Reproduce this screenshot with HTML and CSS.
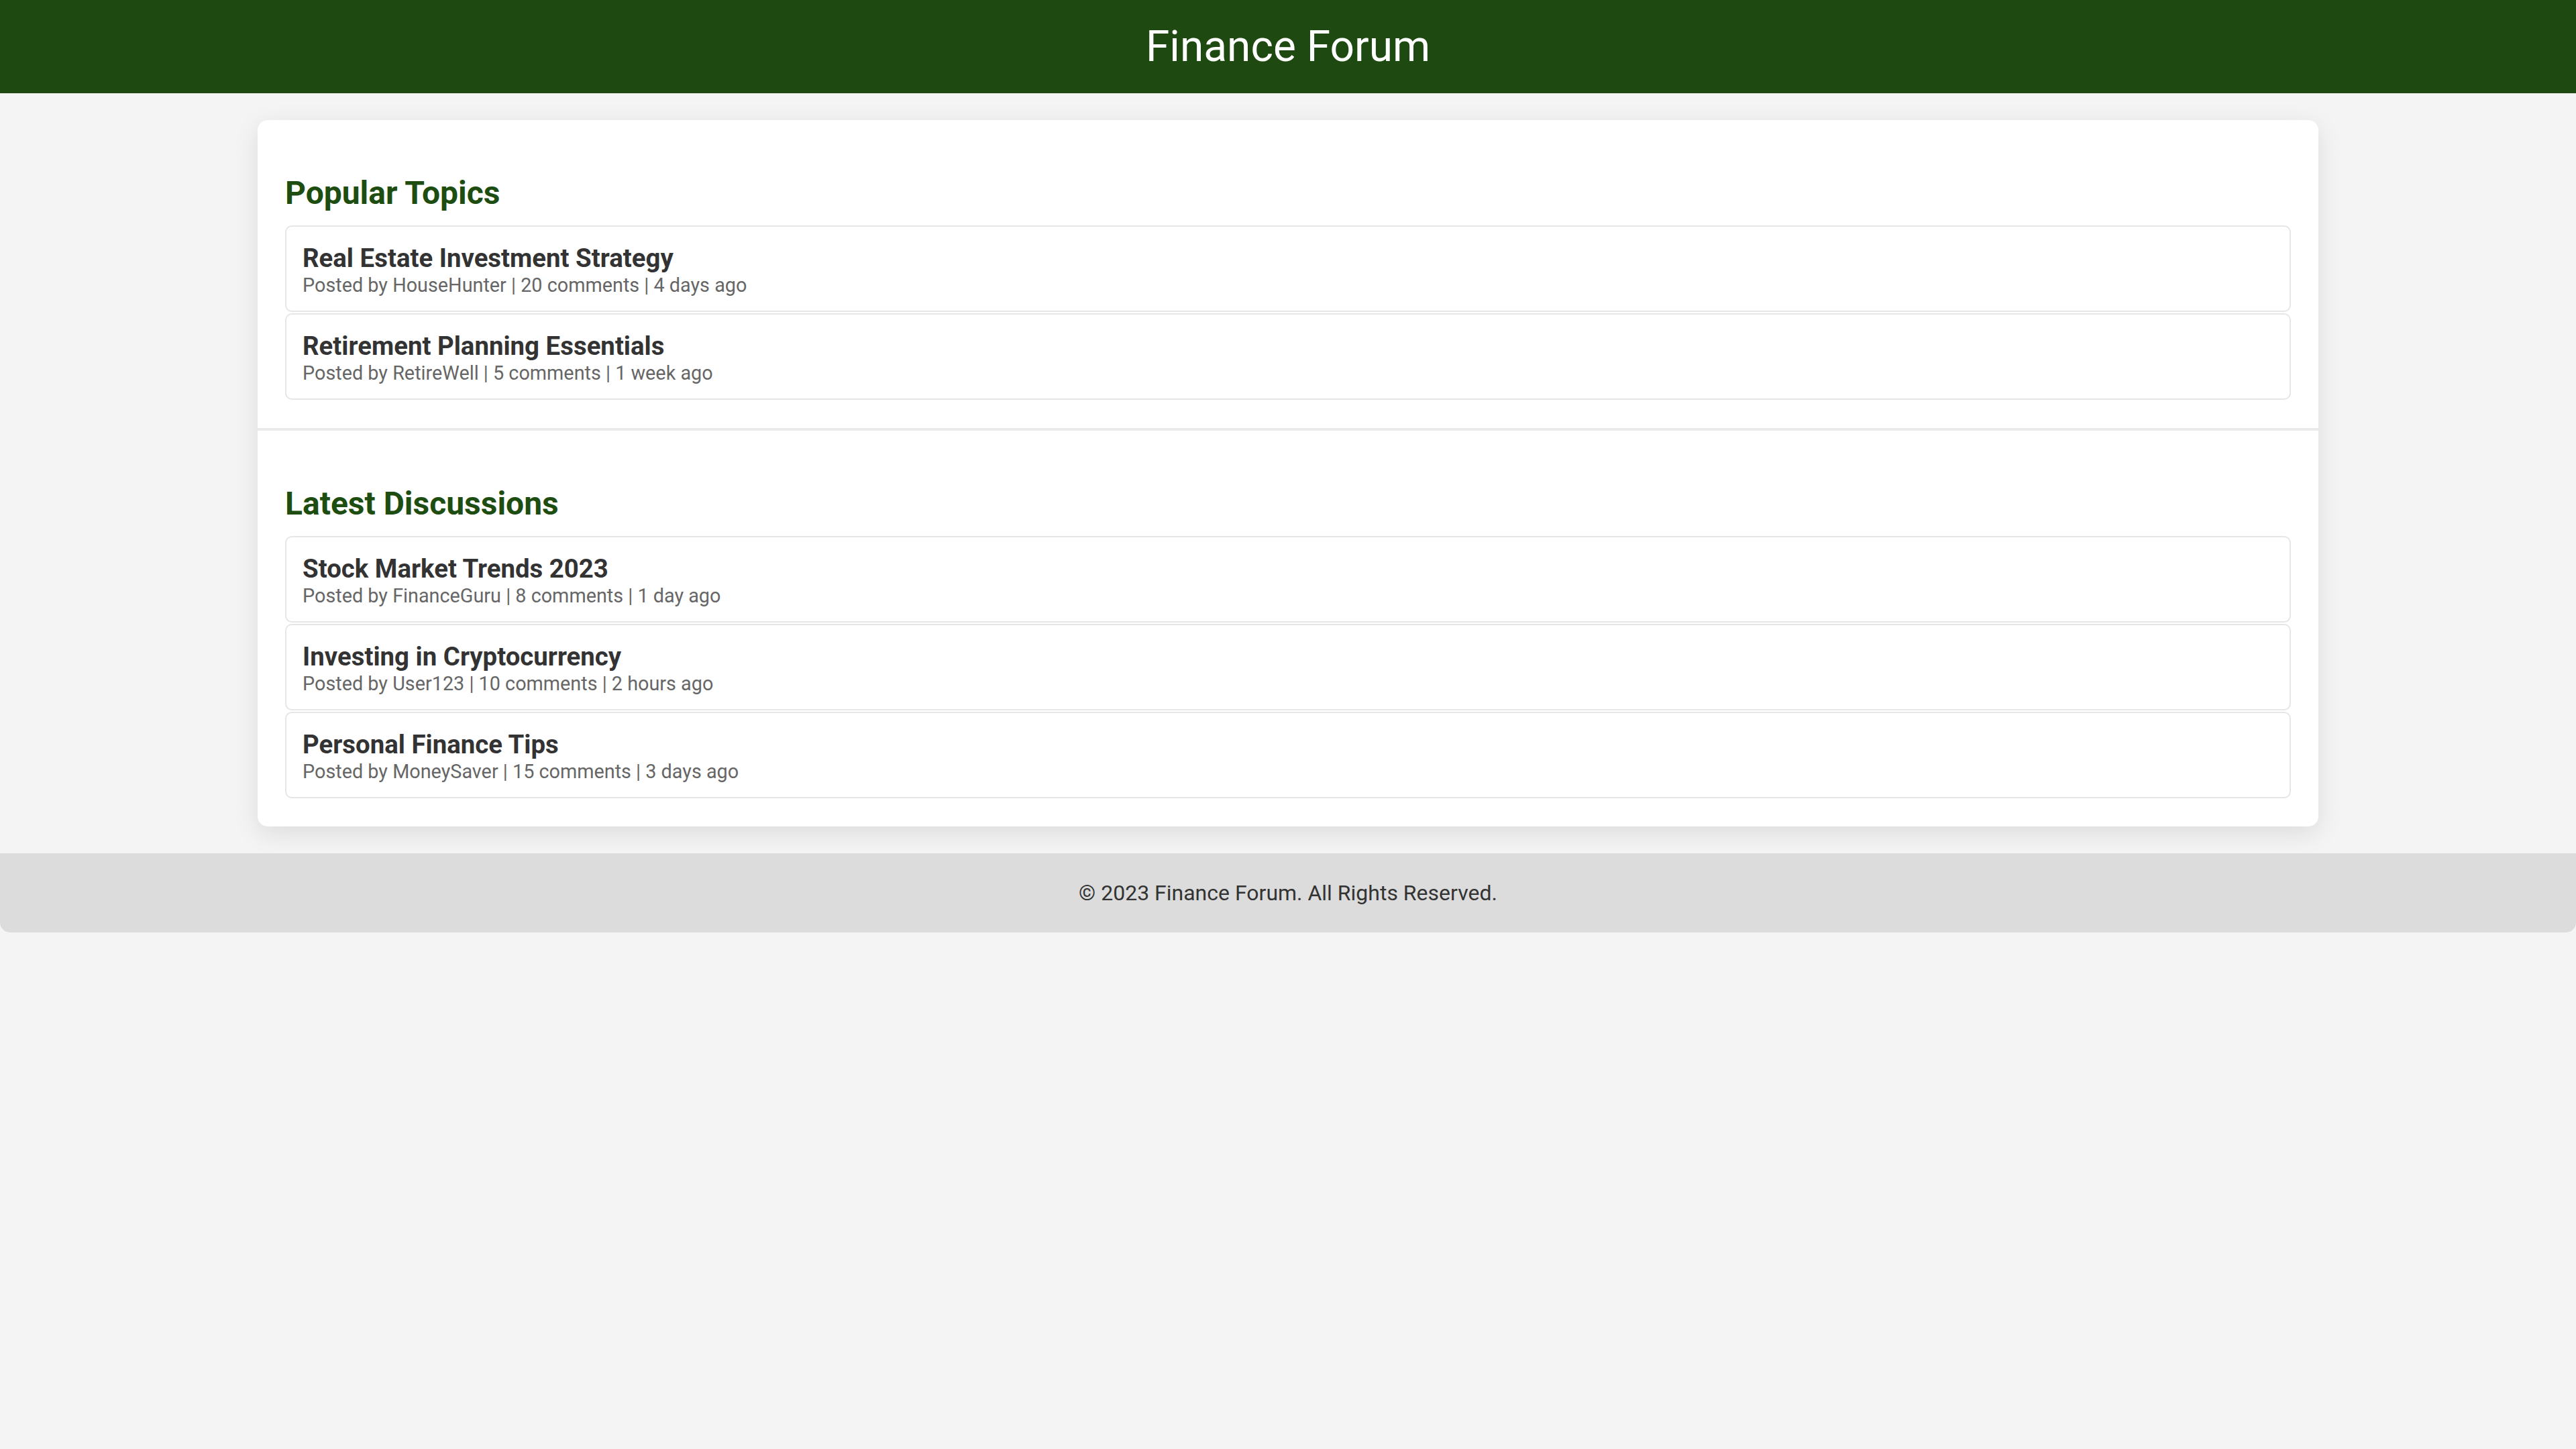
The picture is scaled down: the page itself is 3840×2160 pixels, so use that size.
FILE: index.html
```html
<!DOCTYPE html>
<html lang="en">
<head>
<meta charset="utf-8">
<title>Finance Forum</title>
<link rel="stylesheet" href="styles.css">
</head>
<body>
<header class="site-header">
  <h1 class="site-title">Finance Forum</h1>
</header>
<main class="card">
  <section class="section section-divided">
    <h2 class="section-title">Popular Topics</h2>
    <div class="topic-list">
      <div class="topic">
        <h3 class="topic-title">Real Estate Investment Strategy</h3>
        <p class="topic-meta">Posted by HouseHunter | 20 comments | 4 days ago</p>
      </div>
      <div class="topic">
        <h3 class="topic-title">Retirement Planning Essentials</h3>
        <p class="topic-meta">Posted by RetireWell | 5 comments | 1 week ago</p>
      </div>
    </div>
  </section>
  <section class="section">
    <h2 class="section-title">Latest Discussions</h2>
    <div class="topic-list">
      <div class="topic">
        <h3 class="topic-title">Stock Market Trends 2023</h3>
        <p class="topic-meta">Posted by FinanceGuru | 8 comments | 1 day ago</p>
      </div>
      <div class="topic">
        <h3 class="topic-title">Investing in Cryptocurrency</h3>
        <p class="topic-meta">Posted by User123 | 10 comments | 2 hours ago</p>
      </div>
      <div class="topic">
        <h3 class="topic-title">Personal Finance Tips</h3>
        <p class="topic-meta">Posted by MoneySaver | 15 comments | 3 days ago</p>
      </div>
    </div>
  </section>
</main>
<footer class="site-footer">
  <p class="footer-text">© 2023 Finance Forum. All Rights Reserved.</p>
</footer>
</body>
</html>
```

FILE: styles.css
```css
* {
  box-sizing: border-box;
}

html, body {
  margin: 0;
  padding: 0;
}

body {
  background: #f4f4f4;
  font-family: Roboto, "Liberation Sans", Arial, sans-serif;
  color: #333;
}

.site-header {
  height: 139px;
  background: #1e4a11;
  display: flex;
  align-items: center;
  justify-content: center;
}

.site-title {
  margin: 0;
  color: #ffffff;
  font-size: 64px;
  font-weight: 400;
  line-height: 1;
}

.card {
  width: 3072px;
  margin: 40px auto 0;
  background: #ffffff;
  border-radius: 15px;
  box-shadow: 0 10px 37px rgba(0, 0, 0, 0.1);
  overflow: hidden;
}

.section {
  padding: 40px 41px 42px;
}

.section-divided {
  border-bottom: 4px solid #e9e9e9;
}

.section-title {
  margin: 40px 0 20px;
  color: #1d4d10;
  font-size: 48px;
  font-weight: 700;
  line-height: 57px;
}

.topic-list {
  display: flex;
  flex-direction: column;
  gap: 2px;
}

.topic {
  border: 2px solid #e6e6e6;
  border-radius: 10px;
  padding: 25px 24px 21px;
  background: #ffffff;
}

.topic-title {
  margin: 0;
  font-size: 38.4px;
  font-weight: 700;
  line-height: 44px;
  color: #333333;
}

.topic-meta {
  margin: 1px 0 0;
  font-size: 28.8px;
  line-height: 34px;
  color: #666666;
}

.site-footer {
  margin-top: 40px;
  height: 118px;
  background: #dcdcdc;
  border-radius: 0 0 15px 15px;
  display: flex;
  align-items: center;
  justify-content: center;
}

.footer-text {
  margin: 0;
  font-size: 32px;
  line-height: 1;
  color: #333333;
}
```
